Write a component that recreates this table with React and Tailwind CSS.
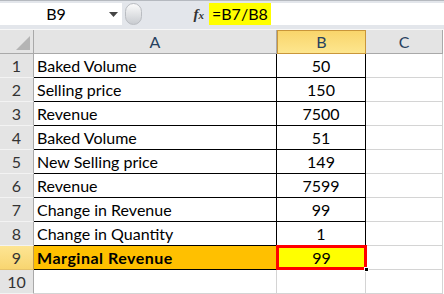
import React from 'react';

const rows = [
  { n: 1, a: 'Baked Volume', b: '50' },
  { n: 2, a: 'Selling price', b: '150' },
  { n: 3, a: 'Revenue', b: '7500' },
  { n: 4, a: 'Baked Volume', b: '51' },
  { n: 5, a: 'New Selling price', b: '149' },
  { n: 6, a: 'Revenue', b: '7599' },
  { n: 7, a: 'Change in Revenue', b: '99' },
  { n: 8, a: 'Change in Quantity', b: '1' },
];

const font = { fontFamily: 'Lato, "Liberation Sans", Arial, sans-serif' };

const FormulaBar = () => (
  <div className="h-[29px] bg-[#e3e6eb] border-t border-[#b5b9bf] flex items-start pt-[2px]">
    <div className="w-[122px] h-[22px] bg-white flex items-center relative">
      <span className="flex-1 text-center text-[16px] text-black pr-[10px]">B9</span>
      <svg width="9" height="5" viewBox="0 0 9 5" className="absolute right-[4px] top-[9px]">
        <path d="M0 0 H9 L4.5 5 Z" fill="#444" />
      </svg>
    </div>
    <div className="w-[17px] h-[22px] ml-[3px] rounded-full bg-gradient-to-b from-[#fbfbfb] to-[#c9ccd1] border border-[#b9bcc1]" />
    <div className="flex-1 flex items-center justify-end h-[22px] pr-[5px]">
      <span className="text-[15px] italic font-bold text-[#333]" style={{ fontFamily: '"Liberation Serif", serif' }}>
        f<span className="text-[11px]">x</span>
      </span>
    </div>
    <div className="w-[235px] h-[22px] bg-white flex items-center">
      <span className="bg-[#ffff00] h-full px-[3px] flex items-center text-[16px] text-black w-[62px]">=B7/B8</span>
    </div>
  </div>
);

const RowHead = ({ n, active }) => (
  <div
    className={`h-[24px] flex items-center justify-center border-r border-b text-[16px] ${
      active
        ? 'bg-gradient-to-b from-[#fde593] to-[#f8d570] border-r-[#c29a4e] border-b-[#e6c26a] text-[#333]'
        : 'bg-[#e4e4e4] border-r-[#a9a9a9] border-b-[#f3f3f3] text-[#333]'
    }`}
  >
    {n}
  </div>
);

export default function App() {
  return (
    <div className="w-[444px] h-[294px] bg-white overflow-hidden" style={font}>
      <FormulaBar />
      <div className="h-[1px] bg-[#f7f7f7]" />
      <div className="grid grid-cols-[34px_243px_89px_77px]">
        {/* header row */}
        <div className="h-[24px] bg-[#e4e4e4] border-r border-b border-[#a9a9a9] relative">
          <svg width="14" height="14" viewBox="0 0 14 14" className="absolute right-[3px] bottom-[3px]">
            <path d="M14 0 V14 H0 Z" fill="#b4b4b4" />
          </svg>
        </div>
        <div className="h-[24px] bg-[#e4e4e4] border-r border-b border-[#a9a9a9] flex items-center justify-center text-[16px] text-[#27415e]">A</div>
        <div className="h-[24px] bg-gradient-to-b from-[#f9d56b] to-[#fde68e] border border-[#c9963a] flex items-center justify-center text-[16px] text-[#27415e]">B</div>
        <div className="h-[24px] bg-[#e4e4e4] border-r border-b border-[#a9a9a9] flex items-center justify-center text-[16px] text-[#27415e]">C</div>

        {rows.map((r) => (
          <React.Fragment key={r.n}>
            <RowHead n={r.n} />
            <div className="h-[24px] border-r border-b border-black flex items-center pl-[3px] text-[16px] text-black">{r.a}</div>
            <div className="h-[24px] border-r border-b border-black flex items-center justify-center text-[16px] text-black">{r.b}</div>
            <div className="h-[24px] border-r border-b border-[#d4d4d4]" />
          </React.Fragment>
        ))}

        <RowHead n={9} active />
        <div className="h-[24px] border-r border-b border-black bg-[#ffc000] flex items-center pl-[3px] text-[16px] font-bold tracking-[0.5px] text-black">Marginal Revenue</div>
        <div className="h-[24px] relative">
          <div className="absolute -left-[1px] -top-[1px] w-[91px] h-[25px] border-[3px] border-[#ff0000] bg-[#ffff00] flex items-center justify-center text-[16px] text-black">99</div>
          <div className="absolute -right-[3px] -bottom-[2px] w-[5px] h-[5px] bg-black border border-white" />
        </div>
        <div className="h-[24px] border-r border-b border-[#d4d4d4]" />

        <RowHead n={10} />
        <div className="h-[24px] border-r border-b border-[#d4d4d4]" />
        <div className="h-[24px] border-r border-b border-[#d4d4d4]" />
        <div className="h-[24px] border-r border-b border-[#d4d4d4]" />
      </div>
    </div>
  );
}
